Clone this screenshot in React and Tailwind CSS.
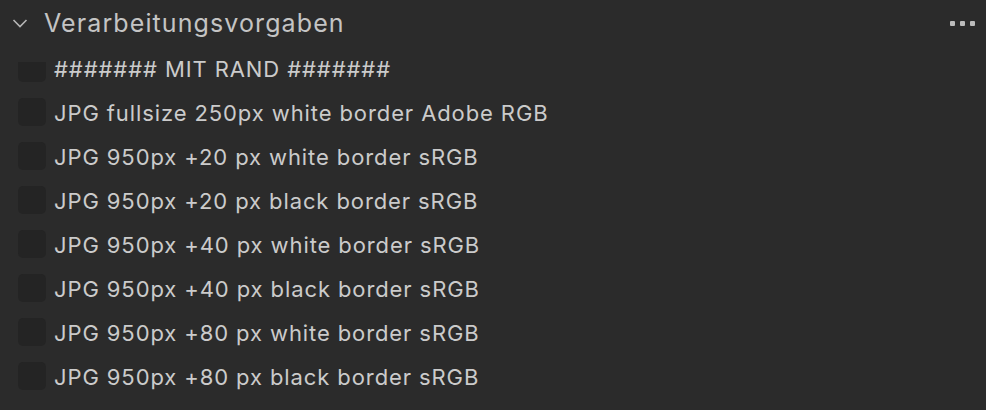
import { useState } from "react";

const presets = [
  "####### MIT RAND #######",
  "JPG fullsize 250px white border Adobe RGB",
  "JPG 950px +20 px white border sRGB",
  "JPG 950px +20 px black border sRGB",
  "JPG 950px +40 px white border sRGB",
  "JPG 950px +40 px black border sRGB",
  "JPG 950px +80 px white border sRGB",
  "JPG 950px +80 px black border sRGB",
];

const App = () => {
  const [checked, setChecked] = useState({});

  return (
    <main
      className="w-[986px] h-[410px] bg-[#2b2b2b] text-[#c9c9c9] overflow-hidden flex flex-col"
      style={{ fontFamily: "Inter, 'Liberation Sans', sans-serif" }}
    >
      <header className="h-[46px] shrink-0 flex items-start pt-[6px] pl-[12px] pr-[11px]">
        <div className="h-[34px] flex items-center gap-[16px] flex-1">
          <svg width="16" height="10" viewBox="0 0 16 10" className="text-[#b5b5b5]">
            <path d="M1.5 2 L8 8.5 L14.5 2" fill="none" stroke="currentColor" strokeWidth="1.6" />
          </svg>
          <h2 className="text-[25px] leading-none text-[#c4c4c4] tracking-[1.1px]">
            Verarbeitungsvorgaben
          </h2>
        </div>
        <button className="h-[34px] flex items-center gap-[5px]">
          <span className="w-[5px] h-[5px] bg-[#bcbcbc] rounded-[1px]" />
          <span className="w-[5px] h-[5px] bg-[#bcbcbc] rounded-[1px]" />
          <span className="w-[5px] h-[5px] bg-[#bcbcbc] rounded-[1px]" />
        </button>
      </header>

      <ul>
        {presets.map((p, i) => (
          <li
            key={i}
            className="h-[44px] flex items-center gap-[8px] pl-[18px] cursor-pointer"
            onClick={() => setChecked({ ...checked, [i]: !checked[i] })}
          >
            <span className="w-[28px] h-[28px] shrink-0 flex flex-col justify-end">
              <span
                className={
                  i === 0
                    ? "h-[20px] rounded-b-[5px] bg-[#242424]"
                    : "h-[28px] rounded-[5px] bg-[#242424]"
                }
              />
            </span>
            <span className="text-[22px] leading-none text-[#cbcbcb] tracking-[0.9px] pt-[2px]">
              {p}
            </span>
          </li>
        ))}
      </ul>
    </main>
  );
};

export default App;
